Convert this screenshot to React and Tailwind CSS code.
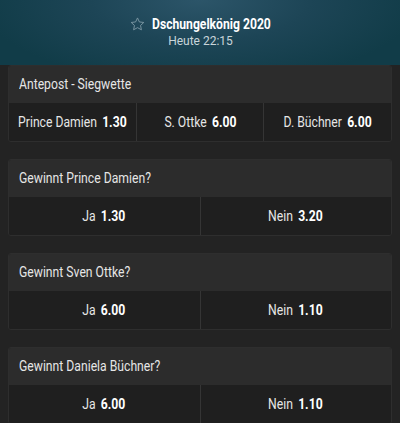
import React from "react";

function Star() {
  return (
    <svg width="15" height="14" viewBox="0 0 24 23" fill="none" stroke="#7f9aa6" strokeWidth="1.5" strokeLinejoin="round">
      <path d="M12 1.5l3.1 6.6 7.2.9-5.3 4.9 1.4 7.1L12 17.5l-6.4 3.5L7 13.9 1.7 9l7.2-.9z" />
    </svg>
  );
}

function Odd({ label, value, last }) {
  return (
    <div className={"flex-1 flex items-center justify-center h-full " + (last ? "" : "border-r border-[#353535]")}>
      <span className="inline-flex items-center gap-[6px] whitespace-nowrap scale-x-[0.87] origin-center">
        <span className="text-[#e6e6e6]">{label}</span>
        <span className="font-bold text-white">{value}</span>
      </span>
    </div>
  );
}

function Card({ title, odds }) {
  return (
    <div className="mx-2 rounded-[3px] overflow-hidden border border-[#2e2e2e]">
      <div className="h-[37px] bg-[#2c2c2c] flex items-center px-[10px] text-[14px] text-[#e6e6e6]">
        <span className="inline-block whitespace-nowrap scale-x-[0.87] origin-left">{title}</span>
      </div>
      <div className="h-[38px] bg-[#1f1f1f] flex text-[14px]">
        {odds.map((o, i) => (
          <Odd key={i} label={o[0]} value={o[1]} last={i === odds.length - 1} />
        ))}
      </div>
    </div>
  );
}

export default function App() {
  return (
    <div className="w-[400px] h-[423px] overflow-hidden bg-[#232323]" style={{ fontFamily: "Roboto, 'Liberation Sans', sans-serif" }}>
      <div className="h-[65px] bg-[radial-gradient(ellipse_55%_130%_at_50%_0%,#2c5569_0%,#1d4556_50%,#113c48_100%)] flex flex-col items-center pt-[15px]">
        <div className="flex items-center gap-[7px] h-[18px]">
          <Star />
          <div className="w-[118px]">
            <span className="inline-block whitespace-nowrap scale-x-[0.81] origin-left text-white font-bold text-[15px] leading-[18px]">Dschungelkönig 2020</span>
          </div>
        </div>
        <div className="text-[#c9d5da] text-[12px] leading-[14px] mt-[1px] ml-[1px]">Heute 22:15</div>
      </div>
      <div className="flex flex-col gap-[17px]">
        <Card title="Antepost - Siegwette" odds={[["Prince Damien", "1.30"], ["S. Ottke", "6.00"], ["D. Büchner", "6.00"]]} />
        <Card title="Gewinnt Prince Damien?" odds={[["Ja", "1.30"], ["Nein", "3.20"]]} />
        <Card title="Gewinnt Sven Ottke?" odds={[["Ja", "6.00"], ["Nein", "1.10"]]} />
        <Card title="Gewinnt Daniela Büchner?" odds={[["Ja", "6.00"], ["Nein", "1.10"]]} />
      </div>
    </div>
  );
}
